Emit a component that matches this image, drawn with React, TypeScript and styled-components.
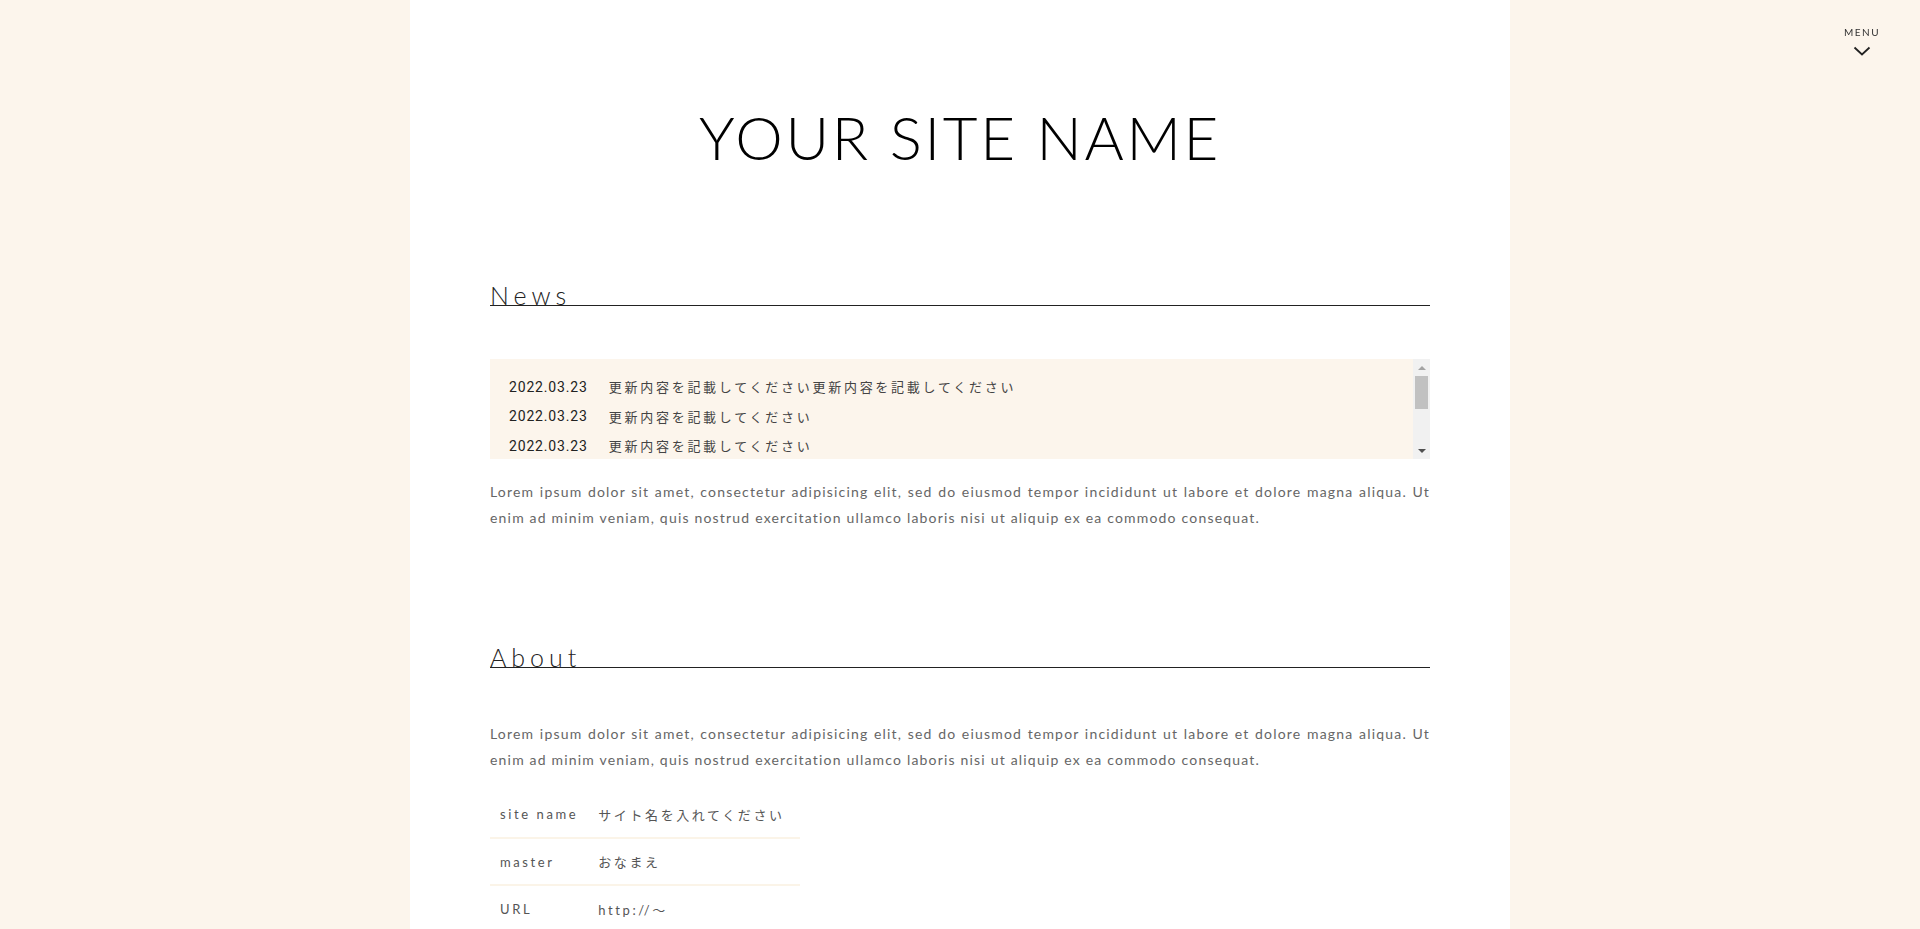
import styled, { createGlobalStyle } from "styled-components";

const GlobalStyle = createGlobalStyle`
  html, body {
    margin: 0;
    padding: 0;
    background: #fcf5ec;
  }
  body {
    font-family: "Lato", "Noto Sans CJK JP", sans-serif;
    color: #333333;
  }
  * {
    box-sizing: border-box;
  }
`;

const Page = styled.div`
  width: 1100px;
  min-height: 100vh;
  margin: 0 auto;
  background: #ffffff;
  padding: 0 80px 80px;
`;

const Header = styled.header`
  display: flex;
  justify-content: center;
  padding: 107px 0 0;
`;

const SiteName = styled.h1`
  margin: 0;
  font-size: 60px;
  line-height: 1;
  font-weight: 300;
  letter-spacing: 0.044em;
  color: #000000;
`;

const Section = styled.section<{ $gap: number }>`
  margin-top: ${(p) => p.$gap}px;
`;

const Heading = styled.h2`
  margin: 0 0 53px;
  font-size: 25px;
  line-height: 20px;
  font-weight: 300;
  letter-spacing: 0.2em;
  color: #222222;
  border-bottom: 1px solid #222222;
`;

const NewsBox = styled.div`
  position: relative;
  height: 100px;
  background: #fcf5ec;
`;

const NewsList = styled.div`
  height: 100%;
  overflow: hidden;
  padding: 13px 17px 13px 19px;
`;

const NewsRow = styled.div`
  display: flex;
  align-items: center;
  height: 29.5px;
  gap: 21px;
`;

const NewsDate = styled.span`
  font-family: "Roboto", "Liberation Sans", sans-serif;
  font-size: 14px;
  font-weight: 400;
  letter-spacing: 0.06em;
  color: #222222;
`;

const NewsText = styled.span`
  font-family: "Noto Sans CJK JP", sans-serif;
  font-size: 13px;
  font-weight: 400;
  letter-spacing: 0.21em;
  color: #444444;
  white-space: nowrap;
`;

const Scrollbar = styled.div`
  position: absolute;
  top: 0;
  right: 0;
  bottom: 0;
  width: 17px;
  display: flex;
  flex-direction: column;
  background: #f1f1f1;
`;

const ScrollArrow = styled.div<{ $down?: boolean }>`
  flex: 0 0 17px;
  display: flex;
  align-items: center;
  justify-content: center;

  &::before {
    content: "";
    width: 0;
    height: 0;
    border-left: 4px solid transparent;
    border-right: 4px solid transparent;
    ${(p) =>
      p.$down
        ? "border-top: 4px solid #505050;"
        : "border-bottom: 4px solid #a3a3a3;"}
  }
`;

const ScrollTrack = styled.div`
  flex: 1;
  padding: 0 2px;
`;

const ScrollThumb = styled.div`
  height: 33px;
  background: #c1c1c1;
`;

const Paragraph = styled.p`
  margin: 20px 0 0;
  font-size: 14px;
  line-height: 26px;
  letter-spacing: 0.085em;
  text-align: justify;
  color: #666666;
`;

const AboutText = styled(Paragraph)`
  margin: 0;
`;

const InfoTable = styled.table`
  width: 310px;
  margin-top: 18px;
  border-collapse: collapse;
`;

const InfoRow = styled.tr`
  border-bottom: 2px solid #fbf4e8;
  &:last-child {
    border-bottom: none;
  }
`;

const InfoCell = styled.td`
  height: 47px;
  padding: 0 10px;
  font-family: "Lato", "Noto Sans CJK JP", sans-serif;
  font-size: 13px;
  letter-spacing: 0.2em;
  color: #555555;
  white-space: nowrap;
  &:first-child {
    width: 98px;
  }
`;

const MenuButton = styled.button`
  position: fixed;
  top: 26px;
  right: 40px;
  display: flex;
  flex-direction: column;
  align-items: center;
  gap: 8px;
  padding: 0;
  border: none;
  background: none;
  cursor: pointer;
`;

const MenuLabel = styled.span`
  font-family: "Lato", sans-serif;
  font-size: 10px;
  line-height: 12px;
  letter-spacing: 0.15em;
  color: #333333;
`;

const news = [
  "更新内容を記載してください更新内容を記載してください",
  "更新内容を記載してください",
  "更新内容を記載してください",
  "更新内容を記載してください",
  "更新内容を記載してください",
  "更新内容を記載してください",
];

const info: [string, string][] = [
  ["site name", "サイト名を入れてください"],
  ["master", "おなまえ"],
  ["URL", "http://～"],
];

const lorem =
  "Lorem ipsum dolor sit amet, consectetur adipisicing elit, sed do eiusmod tempor incididunt ut labore et dolore magna aliqua. Ut enim ad minim veniam, quis nostrud exercitation ullamco laboris nisi ut aliquip ex ea commodo consequat.";

export default function App() {
  return (
    <>
      <GlobalStyle />
      <MenuButton>
        <MenuLabel>MENU</MenuLabel>
        <svg width="18" height="10" viewBox="0 0 18 10">
          <path d="M1.5 1.5l7.5 7 7.5-7" fill="none" stroke="#222" strokeWidth="1.8" />
        </svg>
      </MenuButton>
      <Page>
        <Header>
          <SiteName>YOUR SITE NAME</SiteName>
        </Header>

        <Section $gap={118}>
          <Heading>News</Heading>
          <NewsBox>
            <NewsList>
              {news.map((text, i) => (
                <NewsRow key={i}>
                  <NewsDate>2022.03.23</NewsDate>
                  <NewsText>{text}</NewsText>
                </NewsRow>
              ))}
            </NewsList>
            <Scrollbar>
              <ScrollArrow />
              <ScrollTrack>
                <ScrollThumb />
              </ScrollTrack>
              <ScrollArrow $down />
            </Scrollbar>
          </NewsBox>
          <Paragraph>{lorem}</Paragraph>
        </Section>

        <Section $gap={116}>
          <Heading>About</Heading>
          <AboutText>{lorem}</AboutText>
          <InfoTable>
            <tbody>
              {info.map(([k, v]) => (
                <InfoRow key={k}>
                  <InfoCell>{k}</InfoCell>
                  <InfoCell>{v}</InfoCell>
                </InfoRow>
              ))}
            </tbody>
          </InfoTable>
        </Section>
      </Page>
    </>
  );
}
